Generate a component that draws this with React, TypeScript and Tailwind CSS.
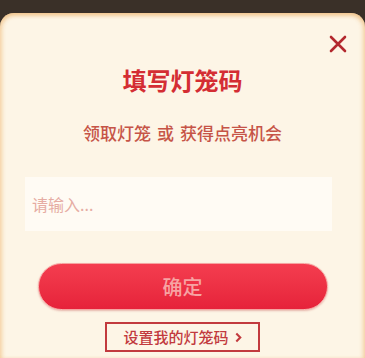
import { useState } from "react";

export default function App() {
  const [code, setCode] = useState("");

  return (
    <div
      className="h-[358px] w-[365px] overflow-hidden bg-[#3a3028]"
      style={{ fontFamily: '"Noto Sans CJK SC", "Noto Sans", sans-serif' }}
    >
      <div className="relative mt-[13px] h-[345px] rounded-t-[14px] bg-[#fdf5e6] shadow-[inset_2px_2px_4px_rgba(236,170,90,0.45),inset_-2px_2px_4px_rgba(236,170,90,0.45)]">
        <button
          type="button"
          aria-label="关闭"
          className="absolute right-[18px] top-[22px] flex h-[18px] w-[18px] items-center justify-center"
        >
          <svg viewBox="0 0 18 18" className="h-[18px] w-[18px]">
            <path
              d="M2 2 L16 16 M16 2 L2 16"
              stroke="#b3282e"
              strokeWidth="2.6"
              strokeLinecap="round"
            />
          </svg>
        </button>

        <div className="flex flex-col items-center pt-[51px]">
          <h2 className="text-[24px] font-bold leading-[32px] text-[#d42d33]">
            填写灯笼码
          </h2>
          <p className="mt-[25px] flex text-[17px] font-medium leading-[24px] text-[#c65447]">
            <span>领取灯笼</span>
            <span className="mx-[6px]">或</span>
            <span>获得点亮机会</span>
          </p>
        </div>

        <div className="ml-[25px] mt-[32px] w-[307px]">
          <input
            value={code}
            onChange={(e) => setCode(e.target.value)}
            placeholder="请输入..."
            className="h-[54px] w-full bg-[#fffbf4] px-[7px] text-[16px] text-[#c65447] outline-none placeholder:text-[#e6aca3]"
          />
        </div>

        <div className="mt-[32px] flex justify-center">
          <button
            type="button"
            className="h-[47px] w-[290px] rounded-full border border-[#f6a3a0] bg-gradient-to-b from-[#f43d4f] to-[#e6223a] text-[20px] font-medium text-[#f7a3a3] shadow-[0_1px_2px_rgba(180,40,40,0.3)]"
          >
            确定
          </button>
        </div>

        <div className="mt-[12px] flex justify-center">
          <a className="flex h-[30px] w-[155px] items-center justify-center gap-[6px] border-2 border-[#c23a3e] text-[15px] font-medium text-[#c23a3e]">
            <span>设置我的灯笼码</span>
            <svg viewBox="0 0 8 12" className="h-[11px] w-[7px]">
              <path
                d="M1.5 1.5 L6 6 L1.5 10.5"
                stroke="#c23a3e"
                strokeWidth="2.4"
                fill="none"
              />
            </svg>
          </a>
        </div>
      </div>
    </div>
  );
}
